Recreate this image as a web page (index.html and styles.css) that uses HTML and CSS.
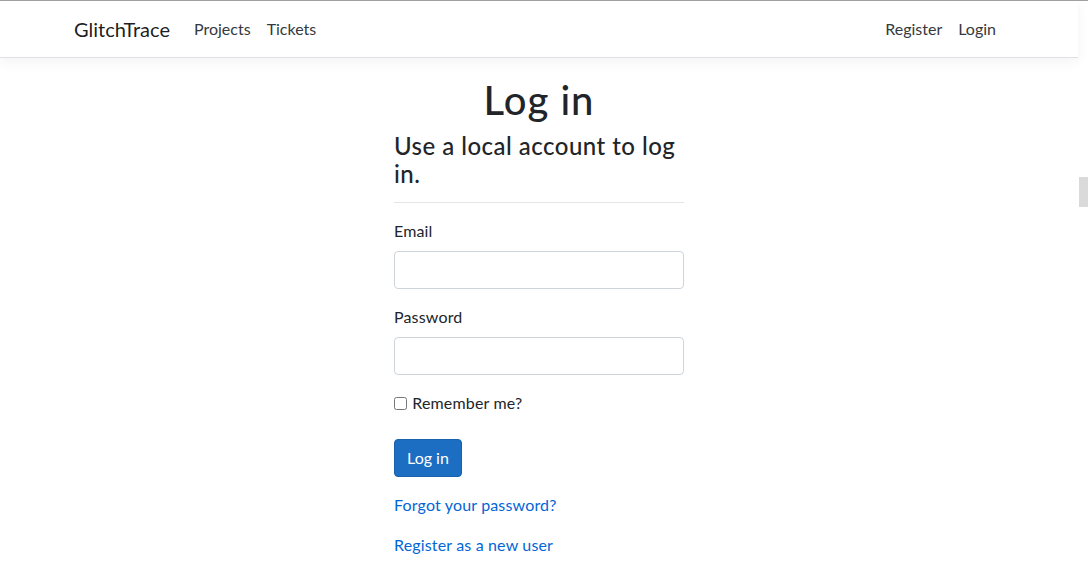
FILE: index.html
```html
<!DOCTYPE html>
<html lang="en">
<head>
<meta charset="utf-8">
<title>Log in - GlitchTrace</title>
<link rel="stylesheet" href="styles.css">
</head>
<body>
<div class="page">
  <header>
    <nav class="navbar">
      <div class="container nav-inner">
        <a class="brand" href="#">GlitchTrace</a>
        <ul class="nav-list">
          <li><a class="nav-link" href="#">Projects</a></li>
          <li><a class="nav-link" href="#">Tickets</a></li>
        </ul>
        <ul class="nav-list nav-right">
          <li><a class="nav-link" href="#">Register</a></li>
          <li><a class="nav-link" href="#">Login</a></li>
        </ul>
      </div>
    </nav>
  </header>
  <main class="container">
    <h1 class="title">Log in</h1>
    <div class="row">
      <section class="col">
        <form>
          <h4 class="subtitle">Use a local account to log in.</h4>
          <hr class="rule">
          <div class="form-group">
            <label class="field-label" for="email">Email</label>
            <input class="form-control" id="email" type="email">
          </div>
          <div class="form-group">
            <label class="field-label" for="password">Password</label>
            <input class="form-control" id="password" type="password">
          </div>
          <div class="form-group">
            <div class="checkbox">
              <label class="field-label"><input class="check" type="checkbox"> Remember me?</label>
            </div>
          </div>
          <div class="form-group">
            <button type="button" class="btn">Log in</button>
          </div>
          <div class="form-group">
            <p class="link-line"><a href="#">Forgot your password?</a></p>
            <p class="link-line"><a href="#">Register as a new user</a></p>
          </div>
        </form>
      </section>
    </div>
  </main>
</div>
<div class="top-line"></div>
<div class="scroll-thumb"></div>
</body>
</html>
```
FILE: styles.css
```css
* { box-sizing: border-box; }
html, body { margin: 0; padding: 0; }
body {
  font-family: Lato, "Noto Sans", sans-serif;
  font-size: 16px;
  line-height: 1.5;
  letter-spacing: 0.01em;
  color: #212529;
  background: #fff;
  overflow: hidden;
}
.page {
  margin-right: 10px;
  padding-top: 1px;
}
.top-line {
  position: fixed;
  left: 0; right: 0; top: 0;
  height: 1px;
  background: #a0a0a0;
}
.scroll-thumb {
  position: fixed;
  right: 0;
  top: 177px;
  width: 9px;
  height: 30px;
  background: #dadada;
}
.container {
  width: 960px;
  margin: 0 auto;
  padding: 0 15px;
}
a { color: #0366d6; text-decoration: none; }

.navbar {
  background: #fff;
  border-bottom: 1px solid #dee2e6;
  box-shadow: 0 4px 12px rgba(0,0,0,.05);
  padding: 8px 0;
  margin-bottom: 16px;
}
.nav-inner {
  display: flex;
  align-items: center;
}
.brand {
  color: rgba(0,0,0,.9);
  font-size: 20px;
  line-height: 30px;
  padding: 5px 0;
  margin-right: 16px;
  letter-spacing: 0;
}
.nav-list {
  list-style: none;
  margin: 0;
  padding: 0;
  display: flex;
}
.nav-right { margin-left: auto; }
.nav-link {
  display: block;
  color: #343a40;
  padding: 8px 8px;
  letter-spacing: 0;
}
.title {
  font-size: 40px;
  font-weight: 500;
  line-height: 1.2;
  letter-spacing: 0.025em;
  text-align: center;
  margin: 0 0 8px;
  padding-top: 2px;
}
.row {
  display: flex;
  margin: 0 -15px;
}
.col {
  width: 320px;
  margin-left: 320px;
  padding: 0 15px;
}
.subtitle {
  font-size: 24px;
  font-weight: 500;
  line-height: 28px;
  letter-spacing: 0.02em;
  margin: 0 0 8px;
}
.rule {
  border: 0;
  border-top: 1px solid rgba(0,0,0,.1);
  margin: 14px 0 16px;
  height: 0;
}
.form-group { margin-bottom: 16px; }
.field-label {
  display: inline-block;
  margin-bottom: 8px;
}
.form-control {
  display: block;
  width: 100%;
  height: 38px;
  padding: 6px 12px;
  font: inherit;
  color: #495057;
  background: #fff;
  border: 1px solid #ced4da;
  border-radius: 4px;
}
.check {
  margin: 3px 1px 3px 0;
  width: 13px;
  height: 13px;
  vertical-align: -1px;
}
.btn {
  font: inherit;
  color: #fff;
  background: #1b6ec2;
  border: 1px solid #1861ac;
  border-radius: 4px;
  padding: 6px 12px;
  line-height: 1.5;
}
.link-line { margin: 0 0 16px; }
```
